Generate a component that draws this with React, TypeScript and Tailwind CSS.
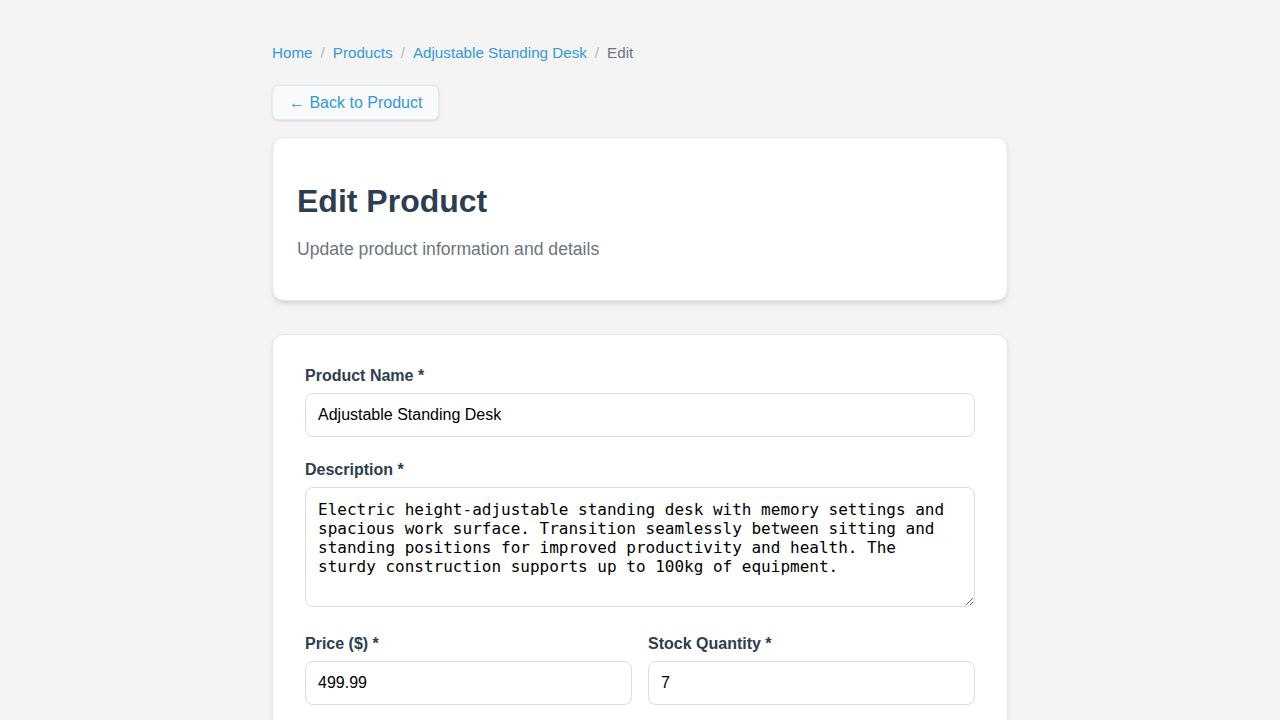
import React from 'react'

const labelCls = 'block text-[16px] leading-[18px] font-bold text-[#2c3e50] mb-2'
const inputCls =
  'block w-full h-[44px] px-3 rounded-lg border border-[#dddddd] bg-white text-[16px] text-black outline-none'

function App() {
  return (
    <div className="min-h-screen bg-[#f4f4f4] font-['Liberation_Sans',Arial,sans-serif]">
      <div className="mx-auto w-[736px] pt-[42px] pb-10">
        <nav className="flex items-center text-[15.2px] leading-[22px]">
          <a href="#" className="text-[#3498db]">Home</a>
          <span className="mx-2 text-[#b0b7bd]">/</span>
          <a href="#" className="text-[#3498db]">Products</a>
          <span className="mx-2 text-[#b0b7bd]">/</span>
          <a href="#" className="text-[#3498db]">Adjustable Standing Desk</a>
          <span className="mx-2 text-[#b0b7bd]">/</span>
          <span className="text-[#6c757d]">Edit</span>
        </nav>

        <button className="mt-[21px] h-[35px] px-4 rounded-md border border-[#e2e8f0] bg-[#f8fafc] text-[16px] text-[#3498db] shadow-sm">
          ← Back to Product
        </button>

        <div className="mt-[17px] bg-white rounded-xl border border-[#e5e7eb] shadow-md px-6 pt-[44px] pb-[37px]">
          <h1 className="text-[32px] leading-[38px] font-bold text-[#2c3e50]">Edit Product</h1>
          <p className="mt-[16px] text-[17.6px] leading-[27px] text-[#6c757d]">Update product information and details</p>
        </div>

        <div className="mt-[33px] bg-white rounded-xl border border-[#e2e8f0] shadow-md p-8">
          <div className="mb-6">
            <label className={labelCls}>Product Name *</label>
            <input className={inputCls} defaultValue="Adjustable Standing Desk" />
          </div>
          <div className="mb-[28px]">
            <label className={labelCls}>Description *</label>
            <textarea
              className="block w-full h-[120px] px-3 py-3 rounded-lg border border-[#dddddd] bg-white text-[16px] leading-[19px] text-black font-['DejaVu_Sans_Mono',monospace] outline-none"
              defaultValue="Electric height-adjustable standing desk with memory settings and spacious work surface. Transition seamlessly between sitting and standing positions for improved productivity and health. The sturdy construction supports up to 100kg of equipment."
            />
          </div>
          <div className="grid grid-cols-2 gap-4 mb-6">
            <div>
              <label className={labelCls}>Price ($) *</label>
              <input className={inputCls} defaultValue="499.99" />
            </div>
            <div>
              <label className={labelCls}>Stock Quantity *</label>
              <input className={inputCls} defaultValue="7" />
            </div>
          </div>
        </div>
      </div>
    </div>
  )
}

export default App
